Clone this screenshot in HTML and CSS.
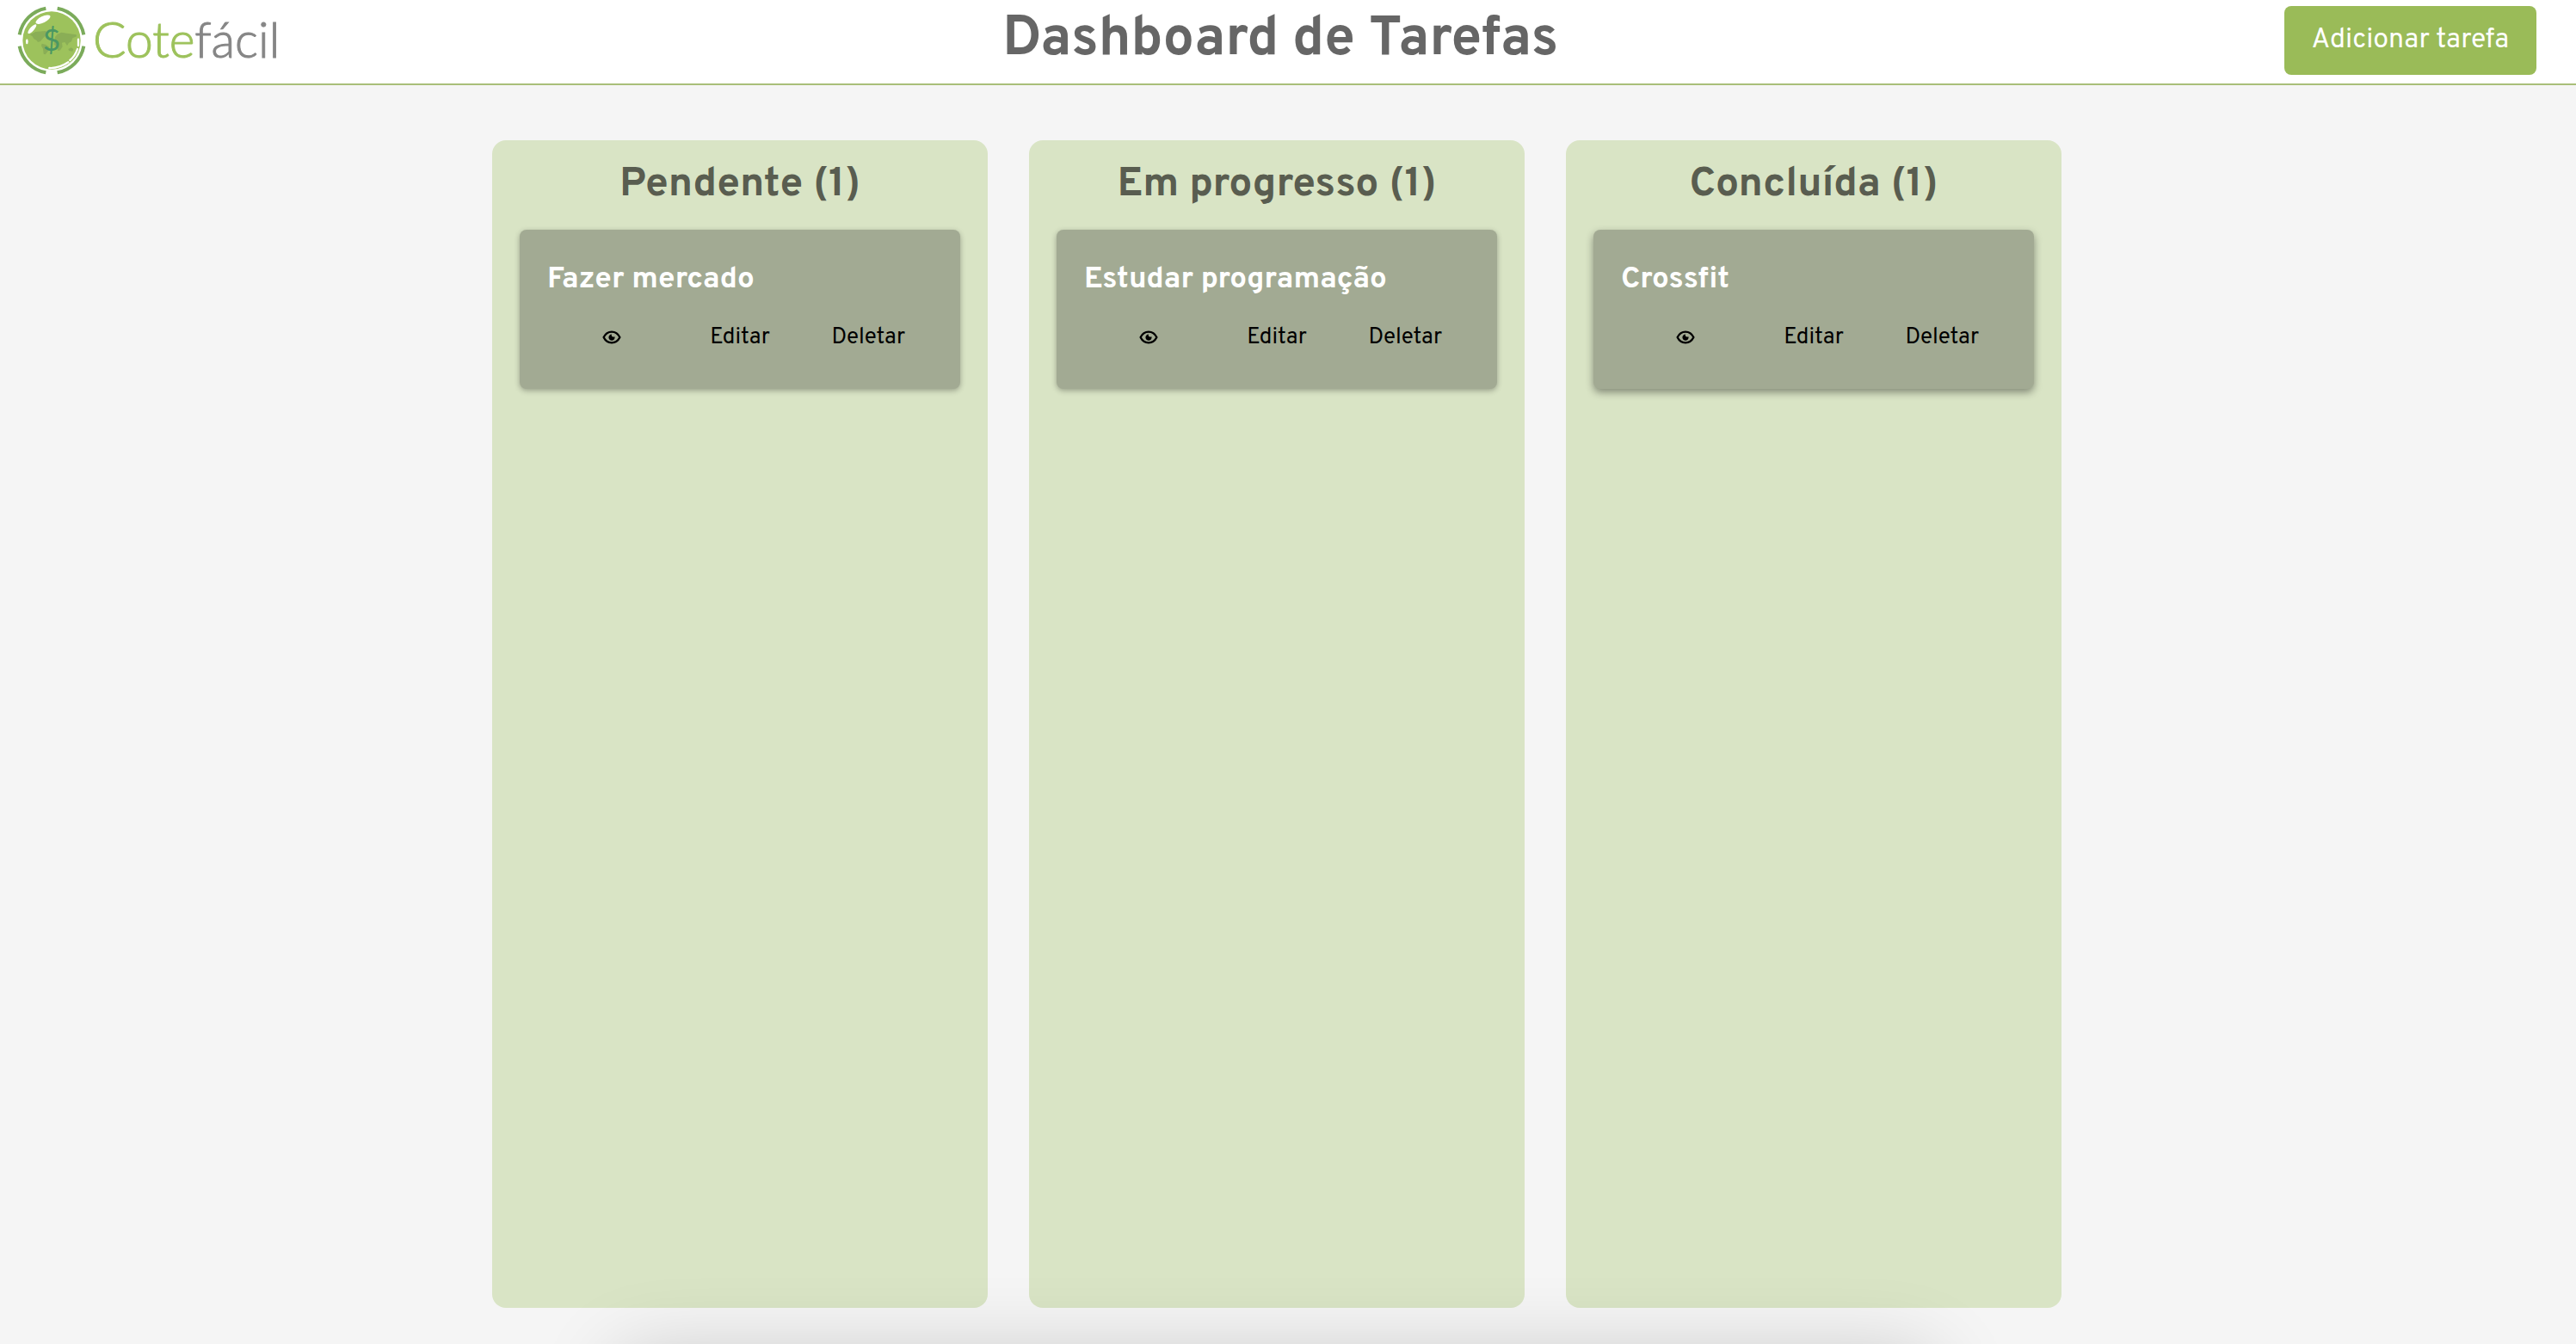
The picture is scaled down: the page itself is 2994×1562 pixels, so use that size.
FILE: index.html
```html
<!DOCTYPE html>
<html lang="pt-BR">
<head>
<meta charset="utf-8">
<title>Dashboard de Tarefas</title>
<link rel="stylesheet" href="styles.css">
</head>
<body>
<svg class="sprite" aria-hidden="true">
  <symbol id="eye" viewBox="0 0 24 24">
    <path d="M2.600 12C4.500 8.200 7.900 5.700 12 5.700s7.500 2.500 9.400 6.300c-1.900 3.800-5.300 6.300-9.400 6.300S4.500 15.800 2.600 12z" fill="none" stroke="currentColor" stroke-width="2.300" stroke-linejoin="round"/>
    <path d="M12 8.500a2 2 0 0 0 1.800 3 3 3 0 0 0 1.700-.2 3.600 3.600 0 1 1-3.500-2.800z" fill="currentColor"/>
  </symbol>
</svg>
<header class="topbar">
  <a class="logo" href="#">
    <svg class="logo-mark" viewBox="0 0 240 240" aria-hidden="true">
      <g fill="none" stroke="#7bab5b" stroke-width="12">
        <path d="M100 8A114 114 0 0 0 8 100"/>
        <path d="M140 8A114 114 0 0 1 232 100"/>
        <path d="M232 140A114 114 0 0 1 140 232"/>
        <path d="M8 140A114 114 0 0 0 100 232"/>
      </g>
      <circle cx="120" cy="120" r="101" fill="#9dc25c"/>
      <g fill="#8aae56">
        <path d="M44 100l20-10 34-3 12 6-10 10-9 8-10 12-9 3-4-6-10-6-5-8z"/>
        <path d="M86 131l14 4 12 8-4 14-10 12-6-2-2-18-6-10z"/>
        <path d="M132 108l8-10 14-6 24 4 28 4 1 6-14 6-4 12-9 4-6 10-8-12-10 2 2 14-8 12-8 2-4-14-10-8z"/>
        <path d="M178 150l10-5 8 5-3 8-12-2z"/>
      </g>
      <g fill="#fff">
        <ellipse cx="90" cy="47" rx="28" ry="11" transform="rotate(-26 90 47)"/>
        <ellipse cx="52" cy="80" rx="21" ry="7" transform="rotate(-48 52 80)"/>
        <ellipse cx="34" cy="124" rx="4" ry="9"/>
      </g>
      <g fill="none" stroke="#fff" stroke-width="7" stroke-linecap="round">
        <path d="M213 116v22"/>
        <path d="M210 150q-8 24-26 39"/>
        <path d="M178 196q-32 22-66 20"/>
      </g>
      <text class="logo-coin" x="120" y="157" text-anchor="middle">$</text>
    </svg>
    <span class="logo-text">Cote<span class="logo-text-end">fácil</span></span>
  </a>
  <h1 class="page-title">Dashboard de Tarefas</h1>
  <button class="add-button" type="button">Adicionar tarefa</button>
</header>
<main class="board">
  <section class="column">
    <h2 class="column-title">Pendente (1)</h2>
    <article class="card">
      <h3 class="card-title">Fazer mercado</h3>
      <div class="card-actions">
        <button class="action" type="button" aria-label="Visualizar"><svg class="eye"><use href="#eye"/></svg></button>
        <button class="action" type="button">Editar</button>
        <button class="action" type="button">Deletar</button>
      </div>
    </article>
  </section>
  <section class="column">
    <h2 class="column-title">Em progresso (1)</h2>
    <article class="card">
      <h3 class="card-title">Estudar programação</h3>
      <div class="card-actions">
        <button class="action" type="button" aria-label="Visualizar"><svg class="eye"><use href="#eye"/></svg></button>
        <button class="action" type="button">Editar</button>
        <button class="action" type="button">Deletar</button>
      </div>
    </article>
  </section>
  <section class="column">
    <h2 class="column-title">Concluída (1)</h2>
    <article class="card card-raised">
      <h3 class="card-title">Crossfit</h3>
      <div class="card-actions">
        <button class="action" type="button" aria-label="Visualizar"><svg class="eye"><use href="#eye"/></svg></button>
        <button class="action" type="button">Editar</button>
        <button class="action" type="button">Deletar</button>
      </div>
    </article>
  </section>
</main>
<div class="bottom-shadow"></div>
</body>
</html>
```

FILE: styles.css
```css
* {
  box-sizing: border-box;
}

body {
  display: flex;
  flex-direction: column;
  min-height: 100vh;
  margin: 0;
  background: #f5f5f5;
  font-family: Overpass, Roboto, sans-serif;
}

h1,
h2,
h3 {
  margin: 0;
}

button {
  border: 0;
  font-family: inherit;
  cursor: pointer;
}

.sprite {
  display: none;
}

.topbar {
  display: flex;
  align-items: center;
  justify-content: space-between;
  padding: 7px 46px 10px 20px;
  background: #fff;
  border-bottom: 2px solid #a9bf79;
}

.logo {
  display: flex;
  align-items: center;
  gap: 8px;
  width: 302px;
  color: #9dc25c;
  text-decoration: none;
}

.logo-mark {
  flex: none;
  width: 80px;
  height: 80px;
}

.logo-coin {
  fill: #4a9763;
  font-family: Lato, sans-serif;
  font-size: 106px;
}

.logo-text {
  padding-bottom: 4px;
  font-family: Lato, sans-serif;
  font-size: 57px;
  font-weight: 300;
  line-height: 76px;
  -webkit-text-stroke: 1px currentColor;
}

.logo-text-end {
  color: #868686;
}

.page-title {
  color: #666;
  font-size: 64px;
  line-height: 72px;
}

.add-button {
  padding: 0 32px;
  border-radius: 8px;
  background: #9abb58;
  color: #fff;
  font-size: 32px;
  line-height: 80px;
}

.board {
  display: grid;
  flex: 1;
  grid-template-columns: repeat(3, 576px);
  justify-content: center;
  gap: 48px;
  padding: 64px 26px 42px 0;
}

.column {
  padding: 20px 32px 32px;
  border-radius: 16px;
  background: #d9e4c5;
}

.column-title {
  margin-bottom: 20px;
  color: #595d50;
  font-size: 48px;
  line-height: 64px;
  text-align: center;
}

.card {
  padding: 34px 32px 40px;
  border-radius: 8px;
  background: #a2aa93;
  box-shadow: 0 2px 6px rgba(0, 0, 0, 0.3);
}

.card-raised {
  box-shadow: 0 4px 10px rgba(0, 0, 0, 0.4);
}

.card-title {
  margin-bottom: 23px;
  color: #fff;
  font-size: 35px;
  line-height: 48px;
}

.card-actions {
  display: grid;
  grid-template-columns: repeat(3, 1fr);
}

.action {
  display: flex;
  align-items: center;
  justify-content: center;
  height: 40px;
  padding: 0;
  background: none;
  color: #000;
  font-size: 26px;
}

.eye {
  width: 24px;
  height: 24px;
}

.bottom-shadow {
  position: fixed;
  top: 100%;
  right: 25%;
  left: 24%;
  height: 200px;
  border-radius: 16px;
  box-shadow: 0 16px 96px rgba(0, 0, 0, 0.2);
  pointer-events: none;
}
```
